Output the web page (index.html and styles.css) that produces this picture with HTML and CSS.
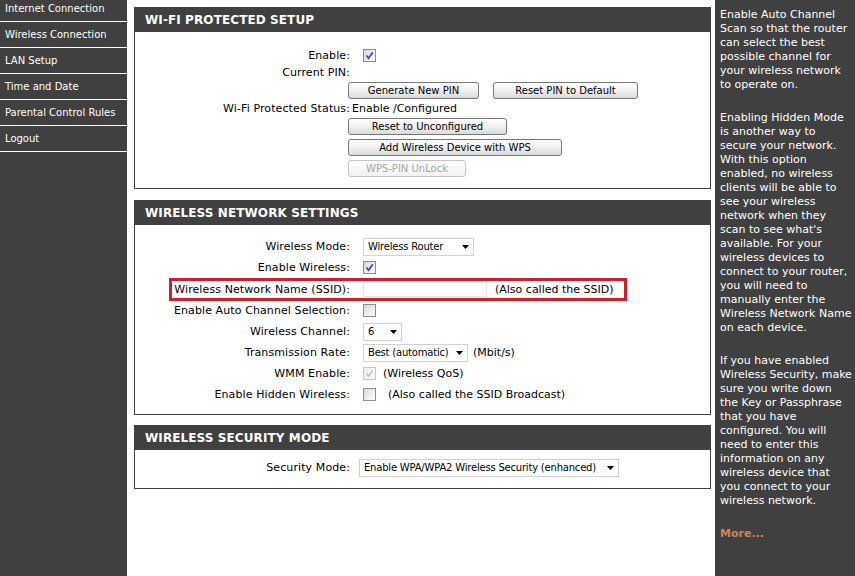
FILE: index.html
```html
<!DOCTYPE html>
<html>
<head>
<meta charset="utf-8">
<title>Wireless Settings</title>
<link rel="stylesheet" href="styles.css">
</head>
<body>
<div class="page">
  <nav class="sidebar">
    <a class="nav-item first">Internet Connection</a>
    <a class="nav-item">Wireless Connection</a>
    <a class="nav-item">LAN Setup</a>
    <a class="nav-item">Time and Date</a>
    <a class="nav-item">Parental Control Rules</a>
    <a class="nav-item">Logout</a>
  </nav>

  <main class="main">
    <section class="box box-wps">
      <h2 class="box-title">WI-FI PROTECTED SETUP</h2>
      <div class="box-body">
        <div class="row h18"><span class="label">Enable:</span><span class="val"><span class="cb"><svg viewBox="0 0 11 11" width="11" height="11"><path d="M2.5 5.5 L4.6 8.2 L8.8 2.3" fill="none" stroke="#4a4aa8" stroke-width="1.8"/></svg></span></span></div>
        <div class="row h17"><span class="label">Current PIN:</span><span class="val"></span></div>
        <div class="row h19"><span class="label"></span><span class="val"><span class="btn w131">Generate New PIN</span><span class="btn w145 gap14">Reset PIN to Default</span></span></div>
        <div class="row h16"><span class="label">Wi-Fi Protected Status:</span><span class="val"><span class="txt">Enable /Configured</span></span></div>
        <div class="row h21"><span class="label"></span><span class="val"><span class="btn w159">Reset to Unconfigured</span></span></div>
        <div class="row h21"><span class="label"></span><span class="val"><span class="btn w214">Add Wireless Device with WPS</span></span></div>
        <div class="row h21"><span class="label"></span><span class="val"><span class="btn w118 disabled">WPS-PIN UnLock</span></span></div>
      </div>
    </section>

    <section class="box box-wlan">
      <h2 class="box-title">WIRELESS NETWORK SETTINGS</h2>
      <div class="box-body">
        <div class="row h21"><span class="label">Wireless Mode:</span><span class="val"><span class="sel w111">Wireless Router<svg class="arrow" viewBox="0 0 7 4" width="7" height="4"><polygon points="0,0 7,0 3.5,4" fill="#000"/></svg></span></span></div>
        <div class="row h21"><span class="label">Enable Wireless:</span><span class="val"><span class="cb"><svg viewBox="0 0 11 11" width="11" height="11"><path d="M2.5 5.5 L4.6 8.2 L8.8 2.3" fill="none" stroke="#4a4aa8" stroke-width="1.8"/></svg></span></span></div>
        <div class="row h22 ssid-row"><span class="label">Wireless Network Name (SSID):</span><span class="val"><span class="input"></span><span class="note n8">(Also called the SSID)</span></span><span class="annot"></span></div>
        <div class="row h21"><span class="label">Enable Auto Channel Selection:</span><span class="val"><span class="cb"></span></span></div>
        <div class="row h21"><span class="label">Wireless Channel:</span><span class="val"><span class="sel w39">6<svg class="arrow" viewBox="0 0 7 4" width="7" height="4"><polygon points="0,0 7,0 3.5,4" fill="#000"/></svg></span></span></div>
        <div class="row h21"><span class="label">Transmission Rate:</span><span class="val"><span class="sel w105">Best (automatic)<svg class="arrow" viewBox="0 0 7 4" width="7" height="4"><polygon points="0,0 7,0 3.5,4" fill="#000"/></svg></span><span class="note n5">(Mbit/s)</span></span></div>
        <div class="row h21"><span class="label">WMM Enable:</span><span class="val"><span class="cb off"><svg viewBox="0 0 11 11" width="11" height="11"><path d="M2.5 5.5 L4.6 8.2 L8.8 2.3" fill="none" stroke="#bdbdbd" stroke-width="1.4"/></svg></span><span class="note n7">(Wireless QoS)</span></span></div>
        <div class="row h21"><span class="label">Enable Hidden Wireless:</span><span class="val"><span class="cb"></span><span class="note n12">(Also called the SSID Broadcast)</span></span></div>
      </div>
    </section>

    <section class="box box-sec">
      <h2 class="box-title">WIRELESS SECURITY MODE</h2>
      <div class="box-body">
        <div class="row h21"><span class="label">Security Mode:</span><span class="val"><span class="sel w260 sec">Enable WPA/WPA2 Wireless Security (enhanced)<svg class="arrow" viewBox="0 0 7 4" width="7" height="4"><polygon points="0,0 7,0 3.5,4" fill="#000"/></svg></span></span></div>
      </div>
    </section>
  </main>

  <aside class="help">
    <p>Enable Auto Channel<br>Scan so that the router<br>can select the best<br>possible channel for<br>your wireless network<br>to operate on.</p>
    <p>Enabling Hidden Mode<br>is another way to<br>secure your network.<br>With this option<br>enabled, no wireless<br>clients will be able to<br>see your wireless<br>network when they<br>scan to see what's<br>available. For your<br>wireless devices to<br>connect to your router,<br>you will need to<br>manually enter the<br>Wireless Network Name<br>on each device.</p>
    <p>If you have enabled<br>Wireless Security, make<br>sure you write down<br>the Key or Passphrase<br>that you have<br>configured. You will<br>need to enter this<br>information on any<br>wireless device that<br>you connect to your<br>wireless network.</p>
    <p class="more">More...</p>
  </aside>
</div>
</body>
</html>
```

FILE: styles.css
```css
* { box-sizing: border-box; }
html, body { margin: 0; padding: 0; }
body {
  width: 855px;
  height: 576px;
  overflow: hidden;
  background: #fff;
  font-family: "DejaVu Sans", Verdana, sans-serif;
  font-size: 11px;
  color: #000;
}
.page {
  display: grid;
  grid-template-columns: 127px 588px 140px;
  height: 576px;
}

/* sidebar */
.sidebar { background: #404040; overflow: hidden; }
.nav-item {
  display: block;
  height: 26px;
  padding-top: 1px;
  line-height: 24px;
  border-bottom: 1px solid #fff;
  color: #fff;
  font-size: 10px;
  padding-left: 5px;
  white-space: nowrap;
}
.nav-item.first { margin-top: -4px; }

/* main */
.main { background: #fff; padding: 7px 4px 0 7px; }
.box { border: 1px solid #404040; }
.box-wlan { margin-top: 11px; }
.box-sec { margin-top: 10px; }
.box-title {
  margin: 0;
  height: 24px;
  padding-top: 1px;
  line-height: 23px;
  background: #404040;
  color: #fff;
  font-size: 12px;
  font-weight: bold;
  letter-spacing: 0.1px;
  padding-left: 10px;
}
.box-wps .box-body { padding: 14px 0 9px; }
.box-wlan .box-body { padding: 11px 0 9px; }
.box-sec .box-body { padding: 7px 0 10px; }

.row { display: flex; align-items: center; position: relative; }
.h16 { height: 16px; }
.h17 { height: 17px; }
.h18 { height: 18px; }
.h19 { height: 19px; }
.h21 { height: 21px; }
.h22 { height: 22px; }
.label {
  flex: none;
  width: 215px;
  text-align: right;
  white-space: nowrap;
  letter-spacing: 0.1px;
}
.val { display: flex; align-items: center; white-space: nowrap; }
.txt { padding-left: 2px; }

/* checkbox */
.cb {
  width: 13px;
  height: 13px;
  margin-left: 13px;
  border: 1px solid #8a8c90;
  background: linear-gradient(135deg, #d6d6d6, #f4f4f4 70%, #fff);
  display: flex;
  align-items: center;
  justify-content: center;
}
.cb.off { border-color: #c8c8c8; background: linear-gradient(135deg, #ececec, #fafafa); }

/* buttons */
.btn {
  height: 17px;
  margin-left: -2px;
  border: 1px solid #777;
  border-radius: 3px;
  background: linear-gradient(#fefefe, #f2f2f2 45%, #dadada);
  font-size: 10px;
  display: flex;
  align-items: center;
  justify-content: center;
  color: #000;
}
.btn.gap14 { margin-left: 14px; }
.btn.disabled { border-color: #c4c4c4; color: #a4a4a4; background: linear-gradient(#fdfdfd, #f2f2f2); }
.w118 { width: 118px; }
.w131 { width: 131px; }
.w145 { width: 145px; }
.w159 { width: 159px; }
.w214 { width: 214px; }

/* selects */
.sel {
  height: 18px;
  margin-left: 13px;
  border: 1px solid #d2d2d2;
  background: #fff;
  display: flex;
  align-items: center;
  padding-left: 4px;
  font-size: 10px;
  letter-spacing: -0.2px;
}
.sel .arrow { margin-left: auto; margin-right: 4px; flex: none; }
.sel.sec { margin-left: 9px; }
.w39 { width: 39px; }
.w105 { width: 105px; }
.w111 { width: 111px; }
.w260 { width: 260px; }

/* input */
.input {
  width: 124px;
  height: 16px;
  margin-left: 13px;
  border: 1px solid #e4e4e4;
  background: #fff;
}
.note { color: #000; }
.n5 { margin-left: 5px; }
.n7 { margin-left: 7px; }
.n8 { margin-left: 8px; }
.n12 { margin-left: 12px; }

/* annotation highlight around SSID row */
.annot {
  position: absolute;
  left: 34px;
  top: 0;
  width: 458px;
  height: 23px;
  border: 3px solid #cc2030;
  pointer-events: none;
}

/* help panel */
.help {
  background: #404040;
  color: #fff;
  padding: 8px 0 0 5px;
  line-height: 14px;
  font-size: 11px;
  white-space: nowrap;
  overflow: hidden;
}
.help p { margin: 0 0 19px; }
.help .more { color: #cf8458; font-weight: bold; }
```
